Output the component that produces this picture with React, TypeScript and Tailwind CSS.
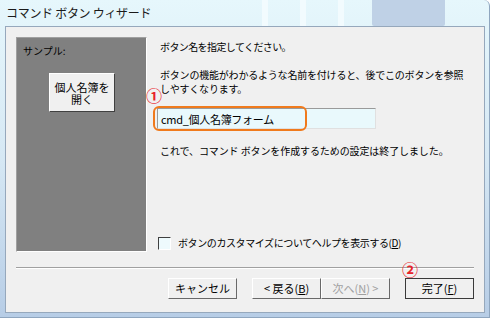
import React from "react";

const font = "font-['Noto_Sans_CJK_JP',sans-serif]";

const Btn: React.FC<{ label: React.ReactNode; disabled?: boolean; def?: boolean; className?: string }> = ({
  label,
  disabled,
  def,
  className = "",
}) => (
  <div
    className={`h-[21px] w-[69px] flex items-center justify-center text-[11px] leading-none bg-[#f0f0f0] ${
      def ? "border border-[#3a3a3a]" : "border border-t-white border-l-white border-r-[#696969] border-b-[#696969]"
    } ${disabled ? "text-[#a0a0a0]" : "text-black"} ${className}`}
  >
    <span>{label}</span>
  </div>
);

const Circled: React.FC<{ n: string; className?: string }> = ({ n, className = "" }) => (
  <span className={`absolute text-[16px] font-bold leading-none text-[#e8222a] ${className}`}>{n}</span>
);

export default function App() {
  return (
    <div className={`w-[493px] h-[322px] bg-white overflow-hidden ${font}`}>
      <div className="w-[490px] h-[318px] flex flex-col bg-gradient-to-b from-[#e6f7fc] via-[#d6e8f4] to-[#b7cde6] rounded-tr-[6px] border-r border-b border-[#8fa6bf]">
        {/* title bar */}
        <div className="h-[26px] flex items-center relative shrink-0">
          <span className="pl-[6px] text-[12px] text-[#1a1a1a] tracking-[-0.3px]">コマンド ボタン ウィザード</span>
          <div className="absolute left-[372px] top-0 w-[73px] h-[26px] bg-[#bfd1e6] rounded-b-[2px]" />
          <div className="absolute left-[262px] top-0 w-[6px] h-[26px] bg-[#f2fbfe]" />
          <div className="absolute left-[300px] top-0 w-[6px] h-[26px] bg-[#f2fbfe]" />
          <div className="absolute left-[338px] top-0 w-[6px] h-[26px] bg-[#f2fbfe]" />
        </div>
        {/* body */}
        <div className="flex-1 ml-[5px] mr-[4px] mb-[4px] bg-[#f0f0f0] border border-[#96a8bc] flex flex-col">
          <div className="flex pl-[10px] pt-[10px] h-[226px]">
            {/* sample panel */}
            <div className="w-[131px] h-[215px] bg-[#808080] border border-t-[#a0a0a0] border-l-[#a0a0a0] border-r-white border-b-white relative">
              <div className="pl-[6px] pt-[7px] text-[10px] leading-[12px] text-black">サンプル:</div>
              <div className="ml-[32px] mt-[16px] w-[66px] h-[39px] bg-[#f0f0f0] border border-t-white border-l-white border-r-[#404040] border-b-[#404040] flex flex-col items-center justify-center text-[11px] leading-[12px] text-black">
                <span>個人名簿を</span>
                <span>開く</span>
              </div>
            </div>
            {/* right column */}
            <div className="ml-[13px] flex-1 text-[10px] leading-[14px] text-black">
              <div className="mt-[3px] tracking-[-0.6px]">ボタン名を指定してください。</div>
              <div className="mt-[14px] tracking-[-0.2px]">
                ボタンの機能がわかるような名前を付けると、後でこのボタンを参照
                <br />
                しやすくなります。
              </div>
              <div className="relative mt-[12px] ml-[-3px] w-[219px] h-[21px] bg-[#e9f9fc] border border-t-[#9a9a9a] border-l-[#9a9a9a] border-r-[#e0e0e0] border-b-[#e0e0e0] flex items-center pl-[3px] text-[11px]">
                <span className="tracking-[-0.3px]">cmd_個人名簿フォーム</span>
                <div className="absolute left-[-5px] top-[-3px] w-[154px] h-[25px] rounded-[6px] border-2 border-[#f07a1c]" />
                <Circled n="①" className="left-[-12px] top-[-22px]" />
              </div>
              <div className="mt-[15px] tracking-[-0.1px]">これで、コマンド ボタンを作成するための設定は終了しました。</div>
              <div className="mt-[78px] ml-[-2px] flex items-center">
                <div className="w-[13px] h-[13px] border border-t-[#404040] border-l-[#404040] border-r-white border-b-white bg-[#eefafd]" />
                <span className="ml-[7px] tracking-[-0.4px]">
                  ボタンのカスタマイズについてヘルプを表示する(<span className="underline">D</span>)
                </span>
              </div>
            </div>
          </div>
          {/* separator */}
          <div className="mx-[10px] mt-[14px] border-t border-t-[#a0a0a0] border-b border-b-white" />
          {/* buttons */}
          <div className="flex mt-[9px] pl-[162px] relative">
            <Btn label="キャンセル" />
            <Btn className="ml-[15px]" label={<>&lt; 戻る(<span className="underline">B</span>)</>} />
            <Btn disabled label={<>次へ(<span className="underline">N</span>) &gt;</>} />
            <Btn def className="ml-[15px]" label={<>完了(<span className="underline">F</span>)</>} />
            <Circled n="②" className="left-[396px] top-[-17px]" />
          </div>
        </div>
      </div>
    </div>
  );
}
